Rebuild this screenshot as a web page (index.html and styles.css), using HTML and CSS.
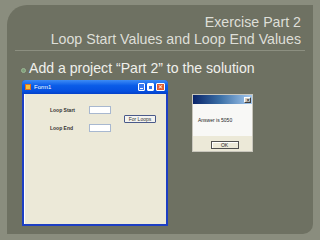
FILE: index.html
```html
<!DOCTYPE html>
<html>
<head>
<meta charset="utf-8">
<link rel="stylesheet" href="styles.css">
</head>
<body>
<div class="slide">
  <div class="header">
    <div class="title">Exercise Part 2</div>
    <div class="title">Loop Start Values and Loop End Values</div>
  </div>
  <div class="rule"></div>
  <div class="bullet"><span class="dot"></span><span>Add a project “Part 2” to the solution</span></div>
  <div class="shots">
    <div class="form">
      <div class="titlebar">
        <span class="appicon"></span>
        <span class="formname">Form1</span>
        <span class="tbtns">
          <span class="tb min"><span class="minbar"></span></span>
          <span class="tb max"><span class="maxbox"></span></span>
          <span class="tb close">✕</span>
        </span>
      </div>
      <div class="client">
        <div class="controls">
          <span class="lbl r1">Loop Start</span>
          <span class="txt r1"></span>
          <span class="lbl r3">Loop End</span>
          <span class="txt r3"></span>
          <span class="btn">For Loops</span>
        </div>
      </div>
    </div>
    <div class="msg">
      <div class="msgbar"><span class="msgclose">✕</span></div>
      <div class="msgbody">Answer is 5050</div>
      <div class="msgfoot"><span class="okbtn">OK</span></div>
    </div>
  </div>
</div>
</body>
</html>
```
FILE: styles.css
```css
html, body {
  margin: 0;
  padding: 0;
}
body {
  width: 320px;
  height: 240px;
  background: #8a8d7e;
  overflow: hidden;
  font-family: "Liberation Sans", Arial, sans-serif;
}
.slide {
  margin: 5px 7px 0 7px;
  height: 229px;
  background: #6e7162;
  border-radius: 20px 0 10px 0;
  display: flex;
  flex-direction: column;
  box-sizing: border-box;
}
.header {
  padding: 9px 12px 0 0;
  text-align: right;
  color: #dedfd8;
  font-size: 14.2px;
}
.title {
  line-height: 17px;
}
.rule {
  margin: 2px 8px 0 8px;
  height: 1px;
  background: #8c8f80;
}
.bullet {
  margin: 9px 0 0 13px;
  display: flex;
  align-items: center;
  font-size: 14.1px;
  line-height: 16px;
  color: #f0f0ec;
}
.dot {
  width: 3px;
  height: 3px;
  border-radius: 50%;
  background: #7f9f7a;
  border: 1px solid #9cb896;
  margin: 5px 3px 0 1px;
}
.shots {
  display: flex;
  align-items: flex-start;
  margin: 4px 0 0 15px;
}
.form {
  width: 146px;
  height: 146px;
  box-sizing: border-box;
  background: #1d3fc4;
  border-radius: 4px 4px 0 0;
  padding: 0 2px 2px 2px;
  display: flex;
  flex-direction: column;
}
.titlebar {
  height: 14px;
  margin: 0 -2px;
  padding: 0 3px;
  border-radius: 4px 4px 0 0;
  background: linear-gradient(#3d8cf5, #0a5ce8 40%, #0550e0 80%, #0440c8);
  display: flex;
  align-items: center;
  color: #fff;
  font-size: 6px;
}
.appicon {
  width: 4px;
  height: 4px;
  background: #f4c040;
  border: 1px solid #e07020;
  margin-right: 3px;
}
.formname {
  flex: 1;
}
.tbtns {
  display: flex;
  gap: 2px;
}
.tb {
  width: 7px;
  height: 8px;
  box-sizing: border-box;
  border: 1px solid #fff;
  border-radius: 1px;
  background: #3a78f0;
  display: flex;
  align-items: flex-end;
  justify-content: center;
}
.minbar {
  width: 3px;
  height: 1px;
  background: #fff;
  margin-bottom: 1px;
}
.maxbox {
  width: 3px;
  height: 3px;
  border: 1px solid #fff;
  border-top-width: 2px;
}
.close {
  width: 9px;
  background: #e05a30;
  color: #fff;
  font-size: 6px;
  line-height: 6px;
  align-items: center;
}
.client {
  flex: 1;
  background: #ece9d8;
  border-left: 1px solid #fff;
}
.controls {
  display: grid;
  grid-template-columns: 39px 22px 13px 32px;
  grid-template-rows: 8px 10px 8px;
  padding: 12px 0 0 25px;
}
.lbl {
  grid-column: 1;
  font-size: 5px;
  font-weight: bold;
  color: #333;
  align-self: center;
  white-space: nowrap;
}
.r1 { grid-row: 1; }
.r3 { grid-row: 3; }
.txt {
  grid-column: 2;
  background: #fff;
  border: 1px solid #a8b8d0;
}
.btn {
  grid-column: 4;
  grid-row: 1 / 4;
  align-self: center;
  height: 8px;
  box-sizing: border-box;
  border: 1px solid #4a5a8a;
  border-radius: 1px;
  background: #f4f4f0;
  font-size: 5px;
  line-height: 6px;
  text-align: center;
  color: #333;
}
.msg {
  margin: 14px 0 0 24px;
  width: 61px;
  height: 58px;
  box-sizing: border-box;
  border: 1px solid #c8c6bc;
  background: #ece9d8;
  display: flex;
  flex-direction: column;
}
.msgbar {
  height: 9px;
  background: linear-gradient(90deg, #0a246a, #3a6ea5 45%, #a6caf0);
  display: flex;
  justify-content: flex-end;
  align-items: center;
  padding-right: 1px;
}
.msgclose {
  width: 7px;
  height: 6px;
  background: #d4d0c8;
  border: 1px solid #fff;
  border-right-color: #404040;
  border-bottom-color: #404040;
  box-sizing: border-box;
  font-size: 5px;
  line-height: 4px;
  text-align: center;
  color: #000;
}
.msgbody {
  height: 32px;
  background: #f8f8f6;
  font-size: 5px;
  color: #222;
  display: flex;
  align-items: center;
  padding-left: 5px;
}
.msgfoot {
  flex: 1;
  display: flex;
  justify-content: center;
  padding: 5px 0 0 4px;
}
.okbtn {
  width: 28px;
  height: 8px;
  box-sizing: border-box;
  border: 1px solid #505050;
  background: #ece9d8;
  box-shadow: inset 1px 1px 0 #fff;
  font-size: 5px;
  line-height: 6px;
  text-align: center;
  color: #222;
}
```
